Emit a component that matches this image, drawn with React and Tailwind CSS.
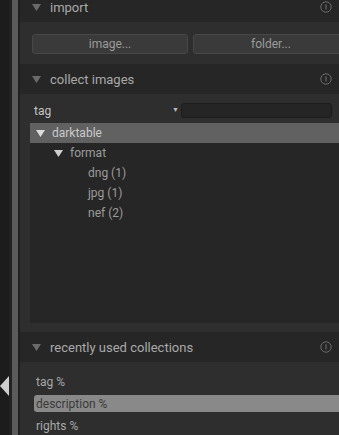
import React from "react";

function Tri({ className = "", color = "#6b6b6b" }) {
  return (
    <svg width="9" height="7" viewBox="0 0 9 7" className={className}>
      <polygon points="0,0 9,0 4.5,7" fill={color} />
    </svg>
  );
}

function Info() {
  return (
    <svg width="12" height="12" viewBox="0 0 12 12" className="shrink-0">
      <circle cx="6" cy="6" r="5.2" fill="none" stroke="#6a6a6a" strokeWidth="1" />
      <line x1="6" y1="3.2" x2="6" y2="8.6" stroke="#6a6a6a" strokeWidth="1.1" />
    </svg>
  );
}

function Header({ title, className = "" }) {
  return (
    <div className={`flex h-[30px] shrink-0 items-center bg-[#262626] pl-[12px] pr-[7px] ${className}`}>
      <Tri className="shrink-0" />
      <span className="ml-[9px] flex-1 text-[13px] leading-none text-[#a9a9a9]">{title}</span>
      <Info />
    </div>
  );
}

function TreeRow({ indent, label, tri, selected }) {
  return (
    <div
      className={`flex h-[20px] items-center text-[12px] ${selected ? "bg-[#616161] text-[#cacaca]" : "text-[#9c9c9c]"}`}
      style={{ paddingLeft: indent }}
    >
      {tri ? (
        <Tri className="mr-[7px] shrink-0" color={selected ? "#dcdcdc" : "#d0d0d0"} />
      ) : null}
      <span>{label}</span>
    </div>
  );
}

export default function App() {
  return (
    <div
      className="relative flex h-[435px] w-[339px] overflow-hidden bg-[#1c1c1c]"
      style={{ fontFamily: "Roboto, 'Liberation Sans', sans-serif" }}
    >
      {/* left strip */}
      <div className="flex h-full w-[20px] shrink-0">
        <div className="w-[9px] bg-[#1c1c1c]" />
        <div className="w-[3px] bg-[#222222]" />
        <div className="w-[6px] bg-[#5b5b5b]" />
        <div className="w-[2px] bg-[#202020]" />
      </div>
      <svg width="10" height="20" viewBox="0 0 10 20" className="absolute left-0 top-[376px]">
        <polygon points="0,10 9,0 9,20" fill="#cfcfcf" />
      </svg>

      {/* panel */}
      <div className="flex min-w-0 flex-1 flex-col">
        <Header title="import" className="-mt-[8px]" />
        <div className="flex h-[42px] shrink-0 gap-[5px] bg-[#2e2e2e] pl-[12px] pt-[12px]">
          <div className="flex h-[20px] w-[156px] shrink-0 items-center justify-center rounded-[3px] border border-[#474747] bg-[#3a3a3a] text-[12px] text-[#9a9a9a]">
            image...
          </div>
          <div className="flex h-[20px] w-[156px] shrink-0 items-center justify-center rounded-[3px] border border-[#474747] bg-[#3a3a3a] text-[12px] text-[#9a9a9a]">
            folder...
          </div>
        </div>

        <Header title="collect images" />
        <div className="flex h-[238px] shrink-0 flex-col bg-[#2e2e2e] pt-[9px]">
          <div className="flex h-[15px] items-center pl-[14px] pr-[7px]">
            <span className="w-[138px] text-[12px] text-[#c4c4c4]">tag</span>
            <span className="text-[7px] leading-none text-[#bbbbbb]">▼</span>
            <div className="ml-[2px] h-[15px] flex-1 rounded-[3px] border border-[#1c1c1c] bg-[#252525]" />
          </div>
          <div className="ml-[10px] mt-[5px] h-[200px] bg-[#262626]">
            <TreeRow indent={6} label="darktable" tri selected />
            <TreeRow indent={24} label="format" tri />
            <TreeRow indent={58} label="dng (1)" />
            <TreeRow indent={58} label="jpg (1)" />
            <TreeRow indent={58} label="nef (2)" />
          </div>
        </div>

        <Header title="recently used collections" className="h-[29px]" />
        <div className="flex flex-1 flex-col gap-[5px] bg-[#2e2e2e] pl-[14px] pt-[11px] text-[12px]">
          <div className="flex h-[17px] items-center pl-[2px] text-[#a8a8a8]">tag %</div>
          <div className="flex h-[17px] items-center rounded-l-[3px] bg-[#898989] pl-[2px] text-[#3a3a3a]">description %</div>
          <div className="flex h-[17px] items-center pl-[2px] text-[#a8a8a8]">rights %</div>
        </div>
      </div>
    </div>
  );
}
